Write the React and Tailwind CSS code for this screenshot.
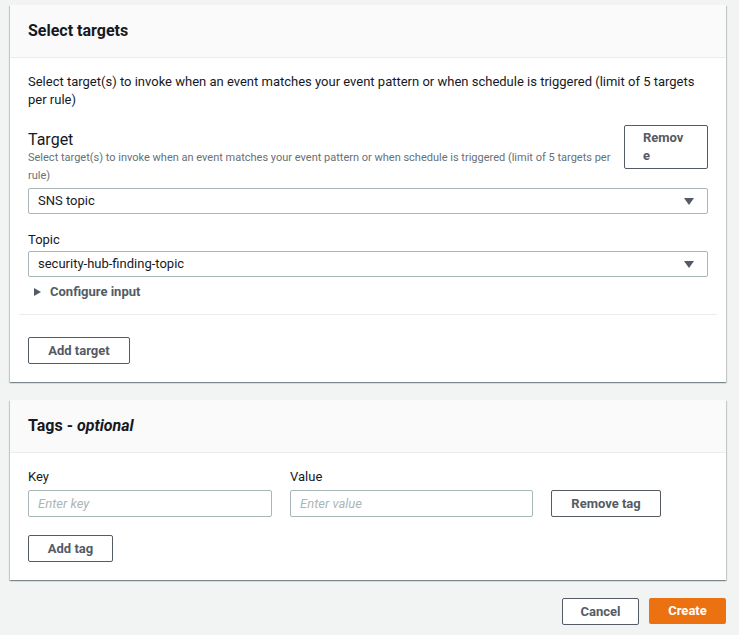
function Caret() {
  return (
    <svg width="10" height="7" viewBox="0 0 10 7" className="shrink-0">
      <path d="M0 0h10L5 7z" fill="#545b64" />
    </svg>
  );
}

function Select({ value }) {
  return (
    <div className="flex items-center justify-between h-[26px] border border-[#aab7b8] rounded-[2px] pl-[9px] pr-[13px] text-[13px] text-[#16191f] bg-white">
      <span>{value}</span>
      <Caret />
    </div>
  );
}

function Card({ title, children }) {
  return (
    <div className="bg-white shadow-[0_1px_1px_0_rgba(0,28,36,0.3),1px_1px_1px_0_rgba(0,28,36,0.15),-1px_1px_1px_0_rgba(0,28,36,0.15)]">
      <div className="h-[53px] flex items-center px-[18px] bg-[#fafafa] border-b border-[#eaeded]">
        <h2 className="text-[16px] font-bold text-[#16191f]">{title}</h2>
      </div>
      <div className="px-[18px] pt-[15px] pb-[18px]">{children}</div>
    </div>
  );
}

const btn = 'h-[27px] border border-[#545b64] rounded-[2px] bg-white text-[13px] font-bold text-[#545b64] flex items-center justify-center';

export default function App() {
  return (
    <div className="w-[739px] min-h-[635px] bg-[#f2f3f3] pt-[5px] pl-[10px] pr-[13px] font-['Roboto',sans-serif]">
      <Card title="Select targets">
        <p className="text-[13px] leading-[18px] text-[#16191f]">
          Select target(s) to invoke when an event matches your event pattern or when schedule is triggered (limit of 5 targets per rule)
        </p>

        <div className="flex items-start gap-[10px] mt-[16px]">
          <div className="flex-1 pt-[5px]">
            <div className="text-[16px] leading-[19px] text-[#16191f]">Target</div>
            <div className="text-[11px] leading-[18px] text-[#687078]">
              Select target(s) to invoke when an event matches your event pattern or when schedule is triggered (limit of 5 targets per rule)
            </div>
          </div>
          <button className="w-[84px] h-[44px] border border-[#545b64] rounded-[2px] bg-white text-[13px] font-bold leading-[18px] text-[#545b64] text-left pl-[18px] pr-[22px] break-all">
            Remove
          </button>
        </div>

        <div className="mt-[3px]">
          <Select value="SNS topic" />
        </div>

        <div className="mt-[16px]">
          <div className="text-[13px] leading-[19px] text-[#16191f]">Topic</div>
          <div className="mt-[2px]">
            <Select value="security-hub-finding-topic" />
          </div>
        </div>

        <div className="mt-[7px] flex items-center h-[16px] text-[13px] font-bold text-[#545b64]">
          <svg width="7" height="8" viewBox="0 0 7 8" className="ml-[6px] mr-[9px]">
            <path d="M0 0v8l7-4z" fill="#545b64" />
          </svg>
          Configure input
        </div>

        <div className="-mx-[9px] mt-[14px] border-t border-[#eaeded]" />

        <button className={`${btn} w-[102px] mt-[22px]`}>Add target</button>
      </Card>

      <div className="mt-[18px]">
        <Card title={<span>Tags - <i>optional</i></span>}>
          <div className="flex items-end gap-[18px]">
            <div className="w-[244px]">
              <div className="text-[13px] leading-[18px] text-[#16191f]">Key</div>
              <input
                placeholder="Enter key"
                className="mt-[4px] w-full h-[27px] border border-[#aab7b8] rounded-[2px] px-[9px] text-[13px] placeholder:italic placeholder:text-[#aab7b8] outline-none"
              />
            </div>
            <div className="w-[243px]">
              <div className="text-[13px] leading-[18px] text-[#16191f]">Value</div>
              <input
                placeholder="Enter value"
                className="mt-[4px] w-full h-[27px] border border-[#aab7b8] rounded-[2px] px-[9px] text-[13px] placeholder:italic placeholder:text-[#aab7b8] outline-none"
              />
            </div>
            <button className={`${btn} w-[110px]`}>Remove tag</button>
          </div>
          <button className={`${btn} w-[85px] mt-[18px]`}>Add tag</button>
        </Card>
      </div>

      <div className="flex justify-end gap-[10px] mt-[18px]">
        <button className={`${btn} w-[77px] h-[26px]`}>Cancel</button>
        <button className="w-[77px] h-[26px] rounded-[2px] bg-[#ec7211] text-white text-[13px] font-bold">Create</button>
      </div>
    </div>
  );
}
